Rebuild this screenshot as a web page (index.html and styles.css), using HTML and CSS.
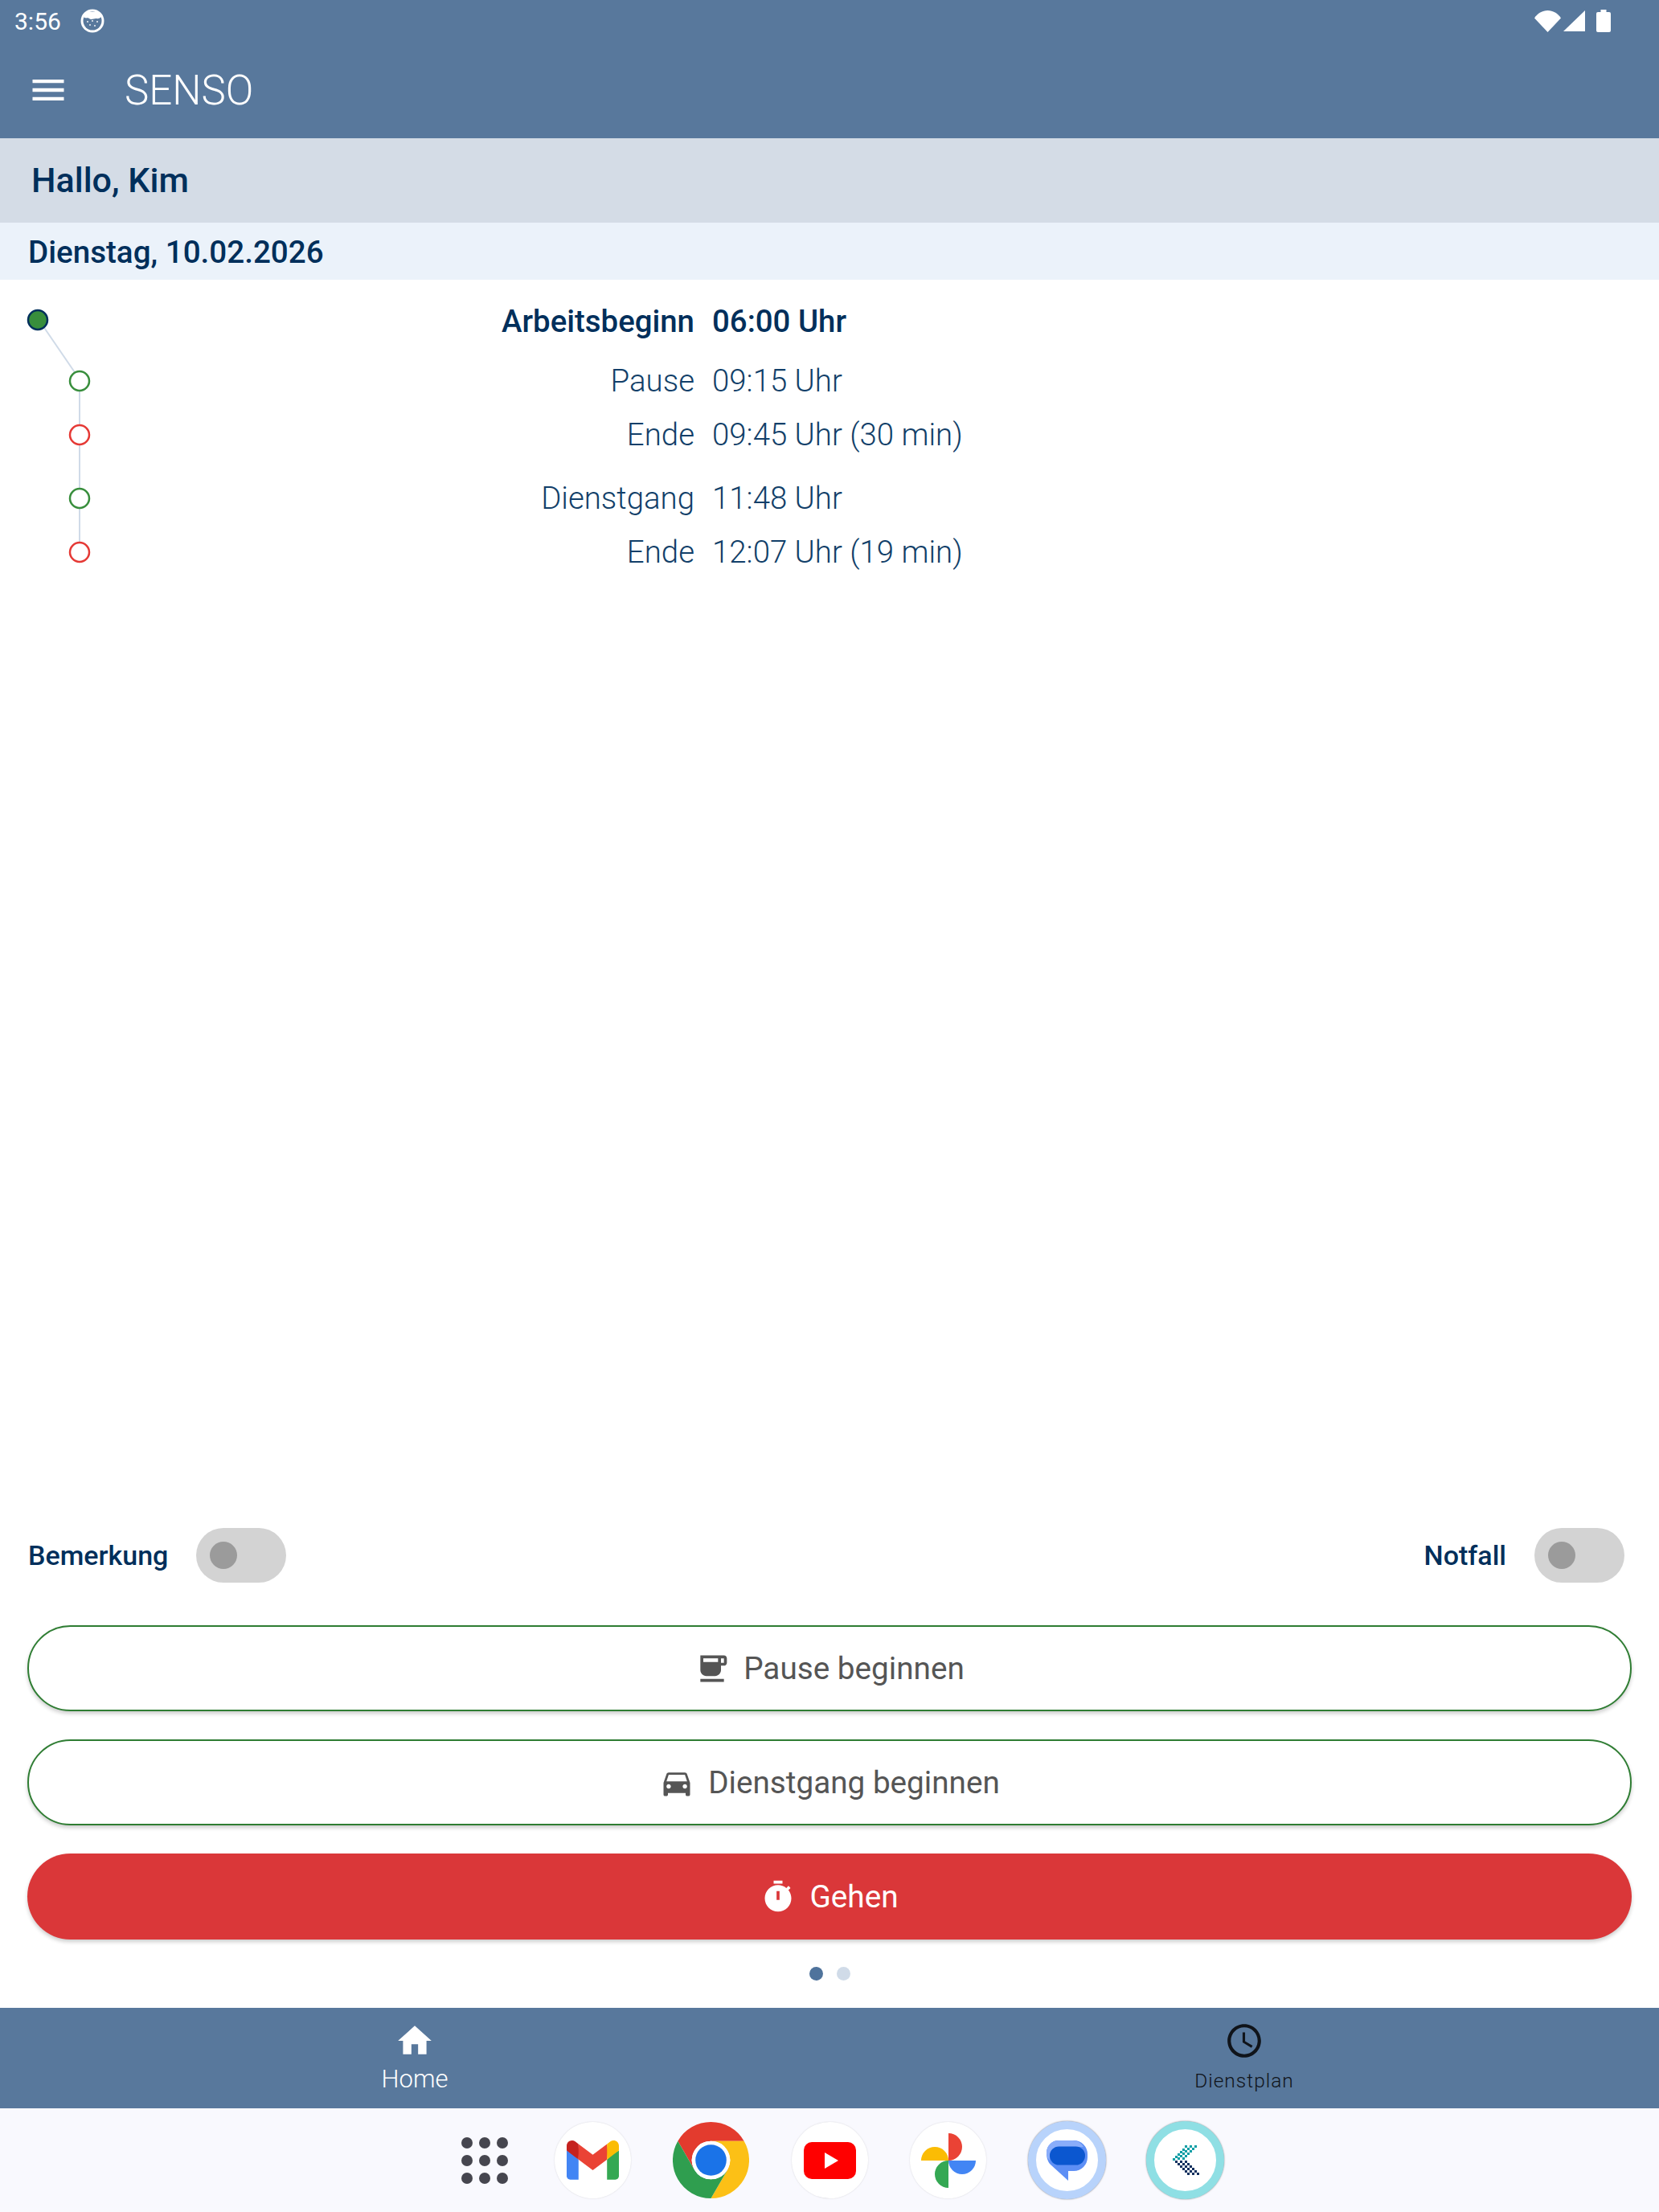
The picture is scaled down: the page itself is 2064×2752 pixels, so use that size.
FILE: index.html
```html
<!DOCTYPE html>
<html lang="de">
<head>
    <meta charset="utf-8">
    <title>SENSO</title>
    <link rel="stylesheet" href="styles.css">
</head>
<body>
    <div class="app">
        <header class="topbar">
            <div class="status-bar">
                <span class="clock">3:56</span>
                <svg class="status-app" viewBox="0 0 30 30">
                    <circle cx="15" cy="15" r="14.500" fill="#fff"/>
                    <circle cx="15" cy="15" r="11.500" fill="#58789c"/>
                    <path d="M4 10c3 3 5 0 7 2s6 0 8 0 4 1 7-2l-3-6H7z" fill="#fff"/>
                    <circle cx="9" cy="16" r=".9" fill="#fff"/>
                    <circle cx="15" cy="15" r=".9" fill="#fff"/>
                    <circle cx="21" cy="16" r=".9" fill="#fff"/>
                    <circle cx="12" cy="20" r=".9" fill="#fff"/>
                    <circle cx="18" cy="21" r=".9" fill="#fff"/>
                </svg>
                <div class="status-right">
                    <svg class="wifi" viewBox="0 0 33 27"><path d="M0 9.500C4 3.500 10 0 16.500 0S29 3.500 33 9.500L16.500 27z" fill="#fff"/></svg>
                    <svg class="signal" viewBox="0 0 27 26"><path d="M27 0v26H0z" fill="#fff"/></svg>
                    <svg class="battery" viewBox="0 0 18 28"><path d="M5.500 0h7v3H16a2 2 0 0 1 2 2v21a2 2 0 0 1-2 2H2a2 2 0 0 1-2-2V5a2 2 0 0 1 2-2h3.500z" fill="#fff"/></svg>
                </div>
            </div>
            <div class="toolbar">
                <svg class="menu-icon" viewBox="0 0 24 24"><path d="M3 18h18v-2H3v2zm0-5h18v-2H3v2zm0-7v2h18V6H3z"/></svg>
                <span class="app-title">SENSO</span>
            </div>
        </header>

        <div class="greeting">Hallo, Kim</div>
        <div class="date-bar">Dienstag, 10.02.2026</div>

        <section class="timeline">
            <svg class="timeline-graph" viewBox="0 0 120 360">
                <path d="M47 48L99 124V337" fill="none" stroke="#d0dbe8" stroke-width="2"/>
                <circle cx="47" cy="50" r="12" fill="#388e3c" stroke="#002f5b" stroke-width="2.500"/>
                <circle cx="99" cy="126" r="12" fill="#fff" stroke="#388e3c" stroke-width="2.500"/>
                <circle cx="99" cy="193" r="12" fill="#fff" stroke="#e53935" stroke-width="2.500"/>
                <circle cx="99" cy="272" r="12" fill="#fff" stroke="#388e3c" stroke-width="2.500"/>
                <circle cx="99" cy="339" r="12" fill="#fff" stroke="#e53935" stroke-width="2.500"/>
            </svg>
            <div class="times">
                <div class="time-row current"><span class="time-label">Arbeitsbeginn</span><span>06:00 Uhr</span></div>
                <div class="time-row pause-start"><span class="time-label">Pause</span><span>09:15 Uhr</span></div>
                <div class="time-row"><span class="time-label">Ende</span><span>09:45 Uhr (30 min)</span></div>
                <div class="time-row trip-start"><span class="time-label">Dienstgang</span><span>11:48 Uhr</span></div>
                <div class="time-row"><span class="time-label">Ende</span><span>12:07 Uhr (19 min)</span></div>
            </div>
        </section>

        <div class="switches">
            <div class="switch-group">
                <span>Bemerkung</span>
                <div class="toggle"><div class="knob"></div></div>
            </div>
            <div class="switch-group">
                <span>Notfall</span>
                <div class="toggle"><div class="knob"></div></div>
            </div>
        </div>

        <div class="actions">
            <button class="action outline">
                <svg viewBox="0 0 24 24">
                    <path d="M20 3H4v10c0 2.210 1.790 4 4 4h6c2.210 0 4-1.790 4-4v-3h2c1.110 0 2-.9 2-2V5c0-1.110-.89-2-2-2zm0 5h-2V5h2v3zM4 19h16v2H4z"/>
                    <rect x="6" y="5" width="10" height="2.500" fill="#fff"/>
                </svg>
                Pause beginnen
            </button>
            <button class="action outline">
                <svg viewBox="0 0 24 24"><path d="M18.920 6.010C18.720 5.420 18.160 5 17.500 5h-11c-.66 0-1.210.42-1.420 1.010L3 12v8c0 .55.45 1 1 1h1c.55 0 1-.45 1-1v-1h12v1c0 .55.45 1 1 1h1c.55 0 1-.45 1-1v-8l-2.080-5.990zM6.500 16c-.83 0-1.500-.67-1.500-1.500S5.670 13 6.500 13s1.500.67 1.500 1.500S7.330 16 6.500 16zm11 0c-.83 0-1.500-.67-1.500-1.500s.67-1.500 1.500-1.500 1.500.67 1.500 1.500-.67 1.500-1.500 1.500zM5 11l1.500-4.500h11L19 11H5z"/></svg>
                Dienstgang beginnen
            </button>
            <button class="action danger">
                <svg viewBox="0 0 24 24"><path fill-rule="evenodd" d="M15 1H9v2h6V1zm-4 13h2V8h-2v6zm8.030-6.610l1.420-1.420c-.43-.51-.9-.99-1.410-1.410l-1.420 1.420C16.070 4.740 14.120 4 12 4c-4.970 0-9 4.030-9 9s4.020 9 9 9 9-4.030 9-9c0-2.120-.74-4.070-1.970-5.610z"/></svg>
                Gehen
            </button>
        </div>

        <div class="pager">
            <span class="pager-dot active"></span>
            <span class="pager-dot"></span>
        </div>

        <nav class="bottom-nav">
            <div class="nav-item active">
                <svg viewBox="0 0 24 24"><path d="M10 20v-6h4v6h5v-8h3L12 3 2 12h3v8z"/></svg>
                <span>Home</span>
            </div>
            <div class="nav-item">
                <svg viewBox="0 0 24 24"><path d="M11.990 2C6.470 2 2 6.480 2 12s4.470 10 9.990 10C17.520 22 22 17.520 22 12S17.520 2 11.990 2zM12 20c-4.420 0-8-3.580-8-8s3.580-8 8-8 8 3.580 8 8-3.580 8-8 8zm.5-13H11v6l5.250 3.150.75-1.230-4.500-2.670z"/></svg>
                <span>Dienstplan</span>
            </div>
        </nav>

        <footer class="dock">
            <svg class="dock-apps" viewBox="0 0 58 58">
                <g fill="#46464f">
                    <circle cx="7" cy="7" r="7"/><circle cx="29" cy="7" r="7"/><circle cx="51" cy="7" r="7"/>
                    <circle cx="7" cy="29" r="7"/><circle cx="29" cy="29" r="7"/><circle cx="51" cy="29" r="7"/>
                    <circle cx="7" cy="51" r="7"/><circle cx="29" cy="51" r="7"/><circle cx="51" cy="51" r="7"/>
                </g>
            </svg>
            <div class="dock-icon">
                <svg class="gmail" viewBox="0 0 256 193">
                    <path fill="#4285F4" d="M58.182 192.050V93.140L27.507 65.077 0 49.504v125.091c0 9.658 7.825 17.455 17.455 17.455h40.727Z"/>
                    <path fill="#34A853" d="M197.818 192.050h40.727c9.659 0 17.455-7.826 17.455-17.455V49.505l-31.156 17.837-27.026 25.798v98.910Z"/>
                    <path fill="#EA4335" d="m58.182 93.140-4.174-38.647 4.174-36.989L128 69.868l69.818-52.364 4.669 34.992-4.669 40.644L128 145.504z"/>
                    <path fill="#FBBC04" d="M197.818 17.504V93.140L256 49.504V26.231c0-21.585-24.640-33.890-41.890-20.945l-16.292 12.218Z"/>
                    <path fill="#C5221F" d="m0 49.504 26.759 20.070L58.182 93.140V17.504L41.890 5.286C24.610-7.660 0 4.646 0 26.230v23.273Z"/>
                </svg>
            </div>
            <svg class="dock-full" viewBox="0 0 96 96">
                <path fill="#e33b2e" d="M48 0A48 48 0 0 1 89.600 24H48A24 24 0 0 0 27.200 60L6.400 24A48 48 0 0 1 48 0Z"/>
                <path fill="#fcc016" d="M89.600 24A48 48 0 0 1 48 96L68.800 60A24 24 0 0 0 48 24Z"/>
                <path fill="#2f9e4f" d="M6.400 24L27.200 60A24 24 0 0 0 68.800 60L48 96A48 48 0 0 1 6.400 24Z"/>
                <circle cx="48" cy="48" r="24" fill="#fff"/>
                <circle cx="48" cy="48" r="19.500" fill="#1a73e8"/>
            </svg>
            <div class="dock-icon">
                <svg class="youtube" viewBox="0 0 65 46">
                    <rect width="65" height="46" rx="10" fill="#f00"/>
                    <path d="M26 13l17 10-17 10z" fill="#fff"/>
                </svg>
            </div>
            <div class="dock-icon">
                <svg class="photos" viewBox="0 0 68 68">
                    <path fill="#ea4335" d="M34 0a17 17 0 0 1 0 34z"/>
                    <path fill="#fbbc04" d="M0 34a17 17 0 0 1 34 0z"/>
                    <path fill="#4285f4" d="M34 34h34a17 17 0 0 1-34 0z"/>
                    <path fill="#34a853" d="M34 34v34a17 17 0 0 1 0-34z"/>
                </svg>
            </div>
            <div class="dock-icon ring-messages">
                <svg class="messages" viewBox="0 0 51 50">
                    <path fill="#5e8ff5" d="M15 0H34A17 17 0 0 1 51 17V21A17 17 0 0 1 34 38H27V50L5 30C1 26 0 20 0 15A15 15 0 0 1 15 0Z"/>
                    <path fill="#8aadfa" d="M15 0H32A16 16 0 0 1 46 8H15A11 11 0 0 0 4 19V25C1 22 0 19 0 15A15 15 0 0 1 15 0Z"/>
                    <rect x="4" y="7.500" width="44" height="23" rx="11.500" fill="#0b57d0"/>
                </svg>
            </div>
            <div class="dock-icon ring-klinik">
                <svg class="klinik" viewBox="0 0 34 38">
                    <g fill="#0d9ea5">
                        <rect x="28" y="0" width="3" height="3"/><rect x="22" y="0" width="3" height="3"/><rect x="16" y="0" width="3" height="3"/>
                        <rect x="25" y="3" width="3" height="3"/><rect x="19" y="3" width="3" height="3"/><rect x="13" y="4" width="3" height="3"/>
                        <rect x="22" y="6" width="3" height="3"/><rect x="16" y="6" width="3" height="3"/><rect x="10" y="7" width="3" height="3"/>
                        <rect x="19" y="9" width="3" height="3"/><rect x="13" y="9" width="3" height="3"/><rect x="7" y="10" width="3" height="3"/>
                        <rect x="16" y="12" width="3" height="3"/><rect x="10" y="12" width="3" height="3"/><rect x="4" y="13" width="3" height="3"/>
                        <rect x="1" y="16" width="3" height="3"/><rect x="7" y="15" width="3" height="3"/><rect x="13" y="15" width="3" height="3"/>
                    </g>
                    <g fill="#12305e">
                        <rect x="4" y="19" width="3" height="3"/><rect x="10" y="19" width="3" height="3"/><rect x="16" y="19" width="3" height="3"/>
                        <rect x="7" y="22" width="3" height="3"/><rect x="13" y="22" width="3" height="3"/><rect x="19" y="22" width="3" height="3"/>
                        <rect x="10" y="25" width="3" height="3"/><rect x="16" y="25" width="3" height="3"/><rect x="22" y="25" width="3" height="3"/>
                        <rect x="13" y="28" width="3" height="3"/><rect x="19" y="28" width="3" height="3"/><rect x="25" y="28" width="3" height="3"/>
                        <rect x="16" y="31" width="3" height="3"/><rect x="22" y="31" width="3" height="3"/><rect x="28" y="31" width="3" height="3"/>
                        <rect x="19" y="34" width="3" height="3"/><rect x="25" y="34" width="3" height="3"/><rect x="31" y="34" width="3" height="3"/>
                    </g>
                </svg>
            </div>
        </footer>
    </div>
</body>
</html>
```
FILE: styles.css
```css
* {
    box-sizing: border-box;
}

body {
    margin: 0;
    background: #fff;
    font-family: Roboto, sans-serif;
}

.app {
    display: flex;
    flex-direction: column;
    height: 2752px;
    overflow: hidden;
}

/* top bars */
.topbar {
    height: 172px;
    background: #58789c;
    color: #fff;
}

.status-bar {
    display: flex;
    align-items: center;
    height: 52px;
    padding-left: 18px;
}

.clock {
    font-size: 30px;
}

.status-app {
    width: 30px;
    height: 30px;
    margin-left: 24px;
}

.status-right {
    display: flex;
    align-items: center;
    gap: 3px;
    margin-left: auto;
    padding-right: 60px;
}

.wifi {
    width: 33px;
    height: 27px;
}

.signal {
    width: 27px;
    height: 26px;
}

.battery {
    width: 18px;
    height: 28px;
    margin-left: 11px;
}

.toolbar {
    display: flex;
    align-items: center;
    height: 120px;
    padding-left: 34px;
}

.menu-icon {
    width: 52px;
    height: 52px;
    fill: #fff;
}

.app-title {
    margin-left: 69px;
    font-size: 51px;
    font-weight: 300;
}

.greeting {
    display: flex;
    align-items: center;
    height: 105px;
    padding: 0 0 2px 39px;
    background: #d4dce6;
    color: #002f5b;
    font-size: 43px;
    font-weight: 500;
}

.date-bar {
    display: flex;
    align-items: center;
    height: 71px;
    padding: 1px 0 0 35px;
    background: #ebf2fa;
    color: #002f5b;
    font-size: 38.600px;
    font-weight: 500;
}

/* timeline */
.timeline {
    position: relative;
    flex: 1;
    padding-top: 27px;
}

.timeline-graph {
    position: absolute;
    left: 0;
    top: 0;
    width: 120px;
    height: 360px;
    overflow: visible;
}

.times {
    display: flex;
    flex-direction: column;
    gap: 18px;
    color: #123f69;
    font-size: 38.400px;
    font-weight: 300;
}

.time-row {
    display: grid;
    grid-template-columns: 864px 1fr;
    column-gap: 22px;
    line-height: 49px;
}

.time-label {
    text-align: right;
}

.time-row.current {
    color: #002f5b;
    font-weight: 500;
}

.time-row.pause-start {
    margin-top: 7px;
}

.time-row.trip-start {
    margin-top: 12px;
}

/* switches */
.switches {
    display: flex;
    justify-content: space-between;
    padding: 0 43px 0 35px;
}

.switch-group {
    display: flex;
    align-items: center;
    gap: 35px;
    color: #002f5b;
    font-size: 34px;
    font-weight: 500;
}

.toggle {
    display: flex;
    align-items: center;
    width: 112px;
    height: 68px;
    padding-left: 17px;
    border-radius: 34px;
    background: #d3d3d3;
}

.knob {
    width: 34px;
    height: 34px;
    border-radius: 50%;
    background: #9b9b9b;
}

/* buttons */
.actions {
    display: flex;
    flex-direction: column;
    gap: 35px;
    margin-top: 53px;
    padding: 0 34px;
}

.action {
    display: flex;
    align-items: center;
    justify-content: center;
    gap: 17px;
    height: 107px;
    border-radius: 54px;
    font-family: inherit;
    font-size: 38.700px;
    box-shadow: 0 3px 5px rgba(0, 0, 0, 0.2);
}

.action svg {
    width: 44px;
    height: 44px;
    fill: currentColor;
}

.action.outline {
    border: 2.500px solid #2f7d33;
    background: #fff;
    color: #555;
}

.action.danger {
    border: none;
    background: #da3739;
    color: #fff;
}

.pager {
    display: flex;
    justify-content: center;
    gap: 17px;
    height: 85px;
    padding-top: 34px;
}

.pager-dot {
    width: 17px;
    height: 17px;
    border-radius: 50%;
    background: #d0dbe8;
}

.pager-dot.active {
    background: #4f739c;
}

/* bottom navigation */
.bottom-nav {
    display: grid;
    grid-template-columns: 1fr 1fr;
    height: 125px;
    background: #58789c;
    color: #10141a;
}

.nav-item {
    display: flex;
    flex-direction: column;
    align-items: center;
    padding-top: 16px;
    font-size: 24.500px;
    font-weight: 300;
    letter-spacing: 1px;
}

.nav-item svg {
    width: 50px;
    height: 50px;
    fill: currentColor;
}

.nav-item span {
    margin-top: 7px;
    line-height: 36px;
}

.nav-item.active {
    color: #fff;
    font-size: 31px;
    letter-spacing: 0;
}

.nav-item.active span {
    margin-top: 3px;
    line-height: 40px;
}

/* launcher dock */
.dock {
    display: flex;
    align-items: center;
    justify-content: center;
    gap: 52.500px;
    height: 129px;
    padding-left: 32px;
    background: #f9f9fe;
}

.dock-icon {
    display: flex;
    align-items: center;
    justify-content: center;
    flex: none;
    width: 95px;
    height: 95px;
    border-radius: 50%;
    background: #fff;
    box-shadow: 0 0 2px rgba(0, 0, 0, 0.15);
}

.dock-apps {
    width: 58px;
    height: 58px;
    margin-right: 5px;
}

.dock-full {
    width: 95px;
    height: 95px;
}

.gmail {
    width: 65px;
    height: 49px;
}

.youtube {
    width: 65px;
    height: 46px;
}

.photos {
    width: 68px;
    height: 68px;
}

.ring-messages {
    width: 97px;
    height: 97px;
    margin: 0 -1px;
    border: 10px solid #b8d3fb;
    box-shadow: 0 0 2px rgba(0, 0, 0, 0.5);
}

.messages {
    flex: none;
    width: 51px;
    height: 50px;
}

.ring-klinik {
    width: 97px;
    height: 97px;
    margin: 0 -1px;
    border: 10px solid #8fdfe4;
    box-shadow: 0 0 2px rgba(0, 0, 0, 0.5);
}

.klinik {
    flex: none;
    width: 34px;
    height: 38px;
}
```
